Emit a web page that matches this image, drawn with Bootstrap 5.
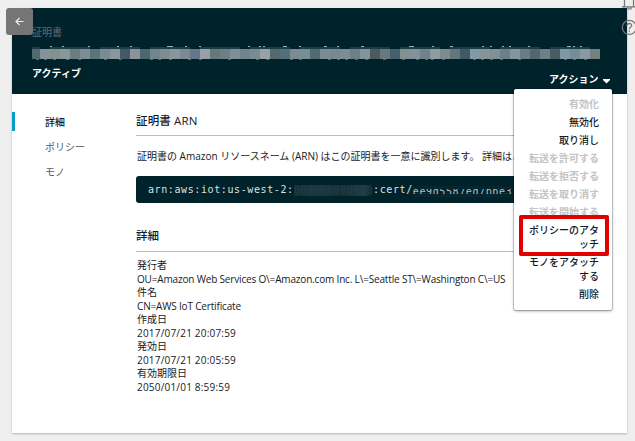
<!DOCTYPE html>
<html lang="ja">
<head>
<meta charset="utf-8">
<title>証明書</title>
<link rel="stylesheet" href="https://cdn.jsdelivr.net/npm/bootstrap@5.3.0/dist/css/bootstrap.min.css">
<style>
html,body{height:441px;overflow:hidden}
body{background:#efefef;color:#16191f;font:10px/14px "Open Sans","Noto Sans CJK JP",sans-serif}
.page{margin:8px 8px 0 12px;width:615px;height:425px;box-shadow:0 1px 2px rgba(0,0,0,.25)}
.top{background:#00222b;height:86px;padding:17px 0 0 20px;color:#fff}
.kind{color:#666d70;line-height:15px}
.mosaic{width:568px;height:15px;margin-top:5px;padding-top:4px}
.mosaic i{flex:0 0 10px;height:10px}
.mosaic i:first-child{flex-basis:8px}
.speck{position:absolute;height:1px;background:#b9c4c6}
.state{font-weight:700;margin-top:5px;line-height:17px}
.back{position:absolute;left:6px;top:8px;width:27px;height:27px;background:#757575;border-radius:3px}
.side{width:124px;padding-top:18px}
.side a{display:block;height:19px;line-height:21px;margin-bottom:6px;padding-left:30px;border-left:3px solid transparent;color:#545b64;text-decoration:none}
.side a.active{border-color:#0a9bc8;color:#16191f;font-weight:500}
.main{width:464px}
.main h2{font-size:11.5px;font-weight:500;line-height:18px;margin:0;border-bottom:1px solid #bbb}
.main .first{padding:18px 0 5px;letter-spacing:.15px}
.main .second{line-height:17px;padding:24px 0 7px;margin-bottom:6px}
.desc{margin:13px 0 0;padding-left:1px;width:378px;line-height:14px;white-space:nowrap;overflow:hidden}
.arn{margin-top:13px;height:27px;background:#00222b;border-radius:3px;color:#dce1e2;font:10px/27px "DejaVu Sans Mono",monospace;letter-spacing:.6px;padding-left:12px;white-space:nowrap;overflow:hidden}
.arn .hid{color:#243d44;background:linear-gradient(90deg,#10313a,#1b3840 30%,#152f37 60%,#203e45 90%,#00222b)}
.arn .hid,.arn .part{display:inline-block;height:11px;line-height:11px;overflow:hidden;vertical-align:middle;position:relative}
.arn .part{color:#b4bdbf;top:1px}
.arn .part::before,.arn .part::after{content:"";position:absolute;left:0;right:0;height:3px;background:#06272f}
.arn .part::before{top:0}.arn .part::after{bottom:0}
.info{padding-left:1px}
.info dt{font-weight:400;line-height:14px;height:14px}
.info dd{margin:0;line-height:15px;height:13px;letter-spacing:.2px}
.info dd.tight{letter-spacing:-.17px}
.act{position:absolute;left:549px;top:71px;color:#fff;font-weight:700;line-height:16px}
.act svg{margin:3px 0 0 4px}
.menu{position:absolute;left:514px;top:89px;width:98px;height:221px;padding:6px 13px 0 13px;background:#fff;border-radius:2px;box-shadow:0 0 0 1px rgba(0,0,0,.14),0 1px 3px rgba(0,0,0,.4);text-align:right}
.menu a{display:block;padding:2px 0;color:#16191f;text-decoration:none;font-weight:500;line-height:14px;line-break:anywhere}
.menu a.off,.menu a.off:hover{color:#c3c3c3;font-weight:700}
.frame{position:absolute;left:519px;top:215px;width:90px;height:41px;border:4px solid #e00000;border-radius:2px}
.bell{position:absolute;left:621px;top:0}
.help{position:absolute;left:621px;top:19px}
</style>
<script src="https://cdn.jsdelivr.net/npm/bootstrap@5.3.0/dist/js/bootstrap.bundle.min.js"></script>
</head>
<body>
<div class="page bg-white">
  <header class="top">
    <div class="kind">証明書</div>
    <div class="mosaic d-flex" id="mosaic"></div>
    <div class="state">アクティブ</div>
  </header>
  <div class="d-flex">
    <nav class="side"><a class="active" href="#">詳細</a><a href="#">ポリシー</a><a href="#">モノ</a></nav>
    <main class="main">
      <h2 class="first">証明書 ARN</h2>
      <p class="desc">証明書の Amazon リソースネーム (ARN) はこの証明書を一意に識別します。 詳細はこ</p>
      <div class="arn">arn:aws:iot:us-west-2:<span class="hid">000000000000</span>:cert/<span class="part">ee9d5587ed7bbe3</span></div>
      <h2 class="second">詳細</h2>
      <dl class="info mb-0">
        <dt>発行者</dt><dd class="tight">OU=Amazon Web Services O\=Amazon.com Inc. L\=Seattle ST\=Washington C\=US</dd>
        <dt>件名</dt><dd class="tight">CN=AWS IoT Certificate</dd>
        <dt>作成日</dt><dd>2017/07/21 20:07:59</dd>
        <dt>発効日</dt><dd>2017/07/21 20:05:59</dd>
        <dt>有効期限日</dt><dd>2050/01/01 8:59:59</dd>
      </dl>
    </main>
  </div>
</div>
<div class="back d-flex align-items-center justify-content-center"><svg width="9" height="9" viewBox="0 0 9 9" fill="none" stroke="#eee" stroke-width="1.2"><path d="M8.5 4.5H1M4.5 1L1 4.5L4.5 8"/></svg></div>
<div class="act">アクション<svg width="7" height="5" viewBox="0 0 7 5"><path d="M0 0H7V1L3.5 4.5L0 1Z" fill="#fff"/></svg></div>
<div class="menu">
  <a class="off">有効化</a><a href="#">無効化</a><a href="#">取り消し</a><a class="off">転送を許可する</a><a class="off">転送を拒否する</a><a class="off">転送を取り消す</a><a class="off">転送を開始する</a><a href="#">ポリシーのアタッチ</a><a href="#">モノをアタッチする</a><a href="#">削除</a>
</div>
<div class="frame"></div>
<svg class="bell" width="14" height="11" viewBox="0 0 14 11" fill="none" stroke="#777" stroke-width="1.2"><path d="M3.5 0V6.5H1.5M1 6.8H14M7 7.5V9H10V7.5M12.5 0V6.5"/></svg>
<svg class="help" width="14" height="17" viewBox="0 0 14 17" fill="none" stroke="#777" stroke-width="1.3"><circle cx="8.3" cy="8.4" r="7"/><path d="M6 6.8C6 3.7 10.7 3.9 10.7 6.5C10.7 8.2 8.4 8 8.4 10.2M8.4 11.4V12.8"/></svg>
<script>
// Pixelated certificate ID: 10px blocks plus stray pixels above and below
const c='516a72 879298 848f8f 89969a 6a7d83 7f8e95 5b7477 7b8b93 8b959d 435a66 8a9499 4b676f 72858a 808e94 8b95a0 7b8991 63788a 98a1a8 677878 6b8185 7f8f95 718590 7a8c93 98a1a8 56696e 53707a 7b8b90 788e93 526a74 7d8b93 758993 7e8d93 6d8085 84949c 4b5a5e 687880 44606c 83908f 81929a 70828a 8f9ba3 7c8d8d 63767c 3f5a64 8499a3 86949a 7e9198 6c8088 8395a0 6a7d85 53686e 6c8089 4b5c60 8098a5 768d96 8a98a5 74827f'.split(' ');
const m=document.getElementById('mosaic');
c.forEach((k,n)=>{const b=document.createElement('i');b.style.background='#'+k;b.style.boxShadow=n%5==1?'none':'0 -2px #1b3d44';m.append(b)});
const dot=(x,y,w,o)=>{const s=document.createElement('span');s.className='speck';s.style.cssText=`left:${x}px;top:${y}px;width:${w}px;opacity:${o}`;document.body.append(s)};
[[50,2],[62,2],[88,2],[117,2],[130,2],[167,6],[185,2],[199,2],[248,2],[259,2],[263,2],[283,4],[299,2],[324,3],[337,2],[361,3],[409,5],[432,2],[450,3],[482,2],[490,2],[502,2],[509,2],[528,2],[567,4],[573,2],[580,2]].forEach(([x,w])=>dot(x,46,w,.85));
[36,44,53,66,78,104,119,150,158,169,188,199,228,256,266,290,299,328,337,345,355,365,383,402,416,425,431,442,473,481,490,500,518,564,573,584].forEach(x=>dot(x,59,3,.45));
</script>
</body>
</html>
